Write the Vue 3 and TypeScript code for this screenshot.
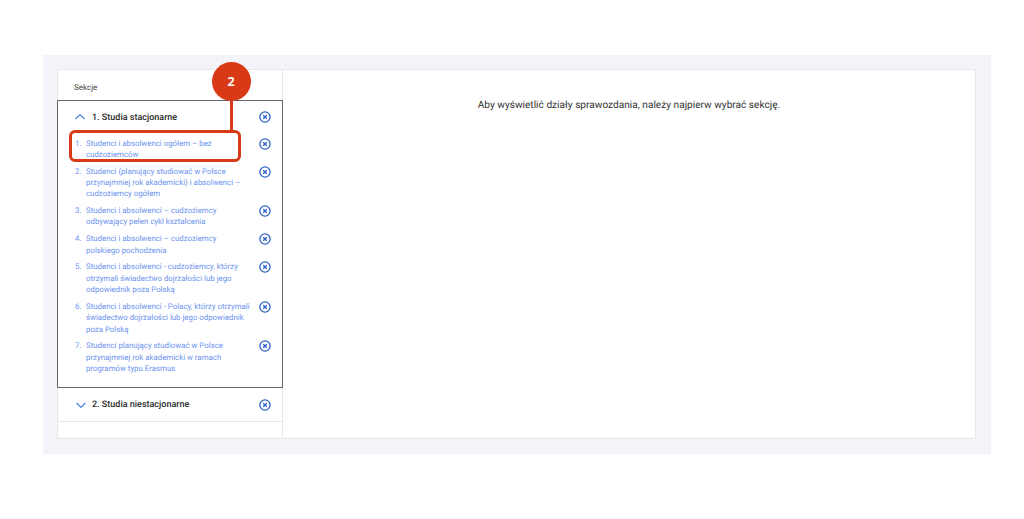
<script setup lang="ts">
const items: string[] = [
  'Studenci i absolwenci ogółem – bez cudzoziemców',
  'Studenci (planujący studiować w Polsce przynajmniej rok akademicki) i absolwenci – cudzoziemcy ogółem',
  'Studenci i absolwenci – cudzoziemcy odbywający pełen cykl kształcenia',
  'Studenci i absolwenci – cudzoziemcy polskiego pochodzenia',
  'Studenci i absolwenci - cudzoziemcy, którzy otrzymali świadectwo dojrzałości lub jego odpowiednik poza Polską',
  'Studenci i absolwenci - Polacy, którzy otrzymali świadectwo dojrzałości lub jego odpowiednik poza Polską',
  'Studenci planujący studiować w Polsce przynajmniej rok akademicki w ramach programów typu Erasmus',
]
</script>

<template>
  <div class="page">
    <div class="panel">
      <div class="card">
        <aside class="side">
          <div class="side-title">Sekcje</div>
          <div class="open-box">
            <div class="head">
              <svg class="chev" width="12" height="12" viewBox="0 0 12 12"><path d="M1.5 8 6 3.6 10.5 8" /></svg>
              <span class="head-text">1. Studia stacjonarne</span>
              <svg class="x" width="12" height="12" viewBox="0 0 12 12"><circle cx="6" cy="6" r="5.1" /><path d="M4.2 4.2 7.8 7.8M7.8 4.2 4.2 7.8" /></svg>
            </div>
            <ol class="list">
              <li v-for="(t, i) in items" :key="i" class="item">
                <span class="num">{{ i + 1 }}.</span>
                <span class="txt">{{ t }}</span>
                <svg class="x" width="12" height="12" viewBox="0 0 12 12"><circle cx="6" cy="6" r="5.1" /><path d="M4.2 4.2 7.8 7.8M7.8 4.2 4.2 7.8" /></svg>
              </li>
            </ol>
          </div>
          <div class="head closed">
            <svg class="chev" width="12" height="12" viewBox="0 0 12 12"><path d="M1.5 4 6 8.4 10.5 4" /></svg>
            <span class="head-text">2. Studia niestacjonarne</span>
            <svg class="x" width="12" height="12" viewBox="0 0 12 12"><circle cx="6" cy="6" r="5.1" /><path d="M4.2 4.2 7.8 7.8M7.8 4.2 4.2 7.8" /></svg>
          </div>
        </aside>
        <main class="main">Aby wyświetlić działy sprawozdania, należy najpierw wybrać sekcję.</main>
      </div>
      <div class="callout-box"></div>
      <div class="callout-line"></div>
      <div class="callout-badge">2</div>
    </div>
  </div>
</template>

<style>
html, body { margin: 0; background: #fff; }
</style>

<style scoped>
.page {
  width: 1024px;
  height: 519px;
  padding: 55px 33px 65px 43px;
  box-sizing: border-box;
  font-family: Roboto, "Liberation Sans", sans-serif;
  text-rendering: geometricPrecision;
  overflow: hidden;
}
.panel {
  position: relative;
  height: 399px;
  background: #f3f4f9;
  padding: 14px 15px 15px 14px;
  box-sizing: border-box;
}
.card {
  display: flex;
  height: 370px;
  background: #fff;
  border: 1px solid #e6e7eb;
  box-sizing: border-box;
}
.side {
  width: 225px;
  flex: none;
  border-right: 1px solid #e6e7eb;
  box-sizing: border-box;
}
.side-title {
  height: 30px;
  padding: 12px 0 0 16px;
  box-sizing: border-box;
  font-size: 8px;
  line-height: 12px;
  color: #444;
}
.open-box {
  margin-left: -1px;
  margin-right: -1px;
  height: 288px;
  border: 1px solid #666;
  box-sizing: border-box;
  padding-top: 6px;
}
.head {
  display: flex;
  align-items: center;
  height: 20px;
  padding-left: 16px;
}
.chev { flex: none; }
.chev path { fill: none; stroke: #4f86e6; stroke-width: 1.3; }
.head-text {
  flex: 1;
  margin-left: 6px;
  padding-top: 1px;
  font-size: 9px;
  font-weight: 500;
  color: #2b2b2b;
}
.x { flex: none; margin-right: 11px; }
.x circle { fill: none; stroke: #2f62c4; stroke-width: 1.3; }
.x path { fill: none; stroke: #2f62c4; stroke-width: 1.4; }
.list {
  list-style: none;
  margin: 0;
  padding: 10.5px 0 0 0;
}
.item {
  display: flex;
  align-items: flex-start;
  padding: 0 0 5.5px 17px;
  font-size: 7.85px;
  line-height: 11.33px;
  color: #6b93f0;
}
.num { width: 11px; flex: none; }
.txt { width: 166px; flex: none; }
.item .x { margin-left: 7px; margin-top: 0; }
.closed {
  height: 34px;
  border-bottom: 1px solid #e6e7eb;
  box-sizing: border-box;
  padding-left: 17px;
}
.closed .head-text { margin-left: 5px; }
.main {
  flex: 1;
  padding-top: 28.5px;
  text-align: center;
  font-size: 10.13px;
  line-height: 14px;
  color: #333;
}
.callout-box {
  position: absolute;
  left: 26px;
  top: 75px;
  width: 172px;
  height: 32px;
  border: 3px solid #d83a17;
  border-radius: 6px;
  box-sizing: border-box;
}
.callout-line {
  position: absolute;
  left: 187px;
  top: 40px;
  width: 3px;
  height: 37px;
  background: #d83a17;
}
.callout-badge {
  position: absolute;
  left: 168.5px;
  top: 7px;
  width: 39px;
  height: 39px;
  border-radius: 50%;
  background: #d83a17;
  color: #fff;
  font-family: "Open Sans", "Liberation Sans", sans-serif;
  font-size: 12.5px;
  font-weight: 700;
  line-height: 39px;
  text-align: center;
}
</style>
